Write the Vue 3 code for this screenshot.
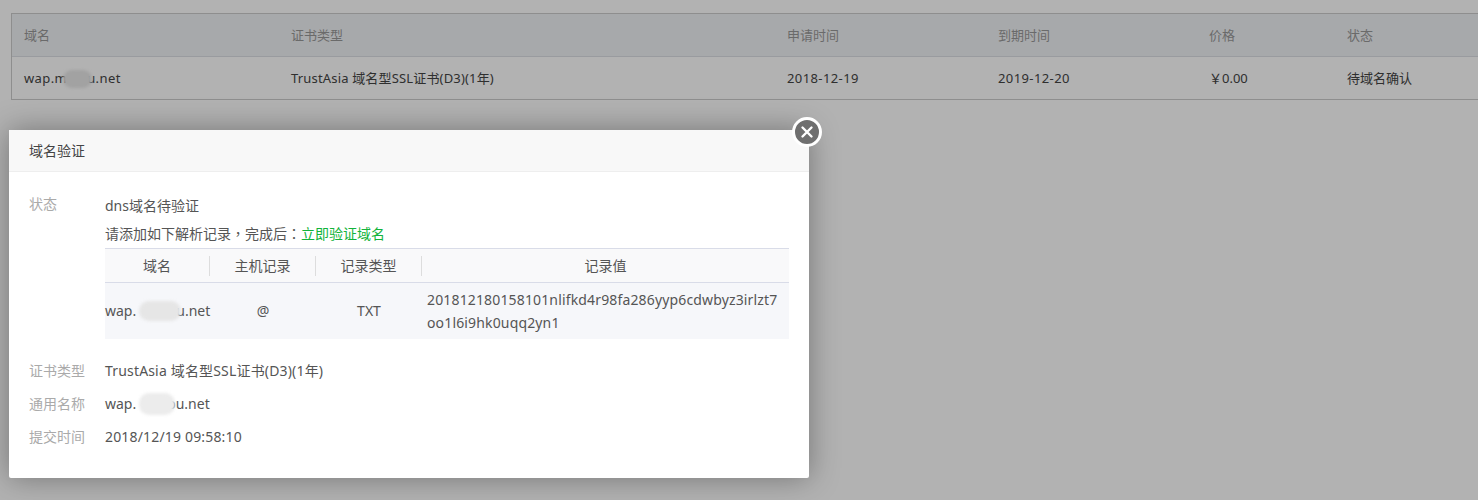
<script setup>
const heads = ['域名', '证书类型', '申请时间', '到期时间', '价格', '状态']
const recordHeads = ['域名', '主机记录', '记录类型', '记录值']
</script>

<template>
  <div class="page">
    <div class="list">
      <div class="list-row list-head">
        <div v-for="h in heads" :key="h">{{ h }}</div>
      </div>
      <div class="list-row list-body">
        <div class="wide">wap.m<span class="mask mask-list"></span>u.net</div>
        <div class="latin">TrustAsia 域名型SSL证书(D3)(1年)</div>
        <div class="wide">2018-12-19</div>
        <div class="wide">2019-12-20</div>
        <div>￥0.00</div>
        <div>待域名确认</div>
      </div>
    </div>

    <div class="scrim"></div>

    <div class="modal">
      <button class="close" aria-label="关闭">
        <svg width="14" height="14" viewBox="0 0 14 14">
          <path d="M2.5 2.5l9 9M11.5 2.5l-9 9" stroke="#fff" stroke-width="2.4" stroke-linecap="round" fill="none" />
        </svg>
      </button>
      <div class="modal-title">域名验证</div>
      <div class="modal-body">
        <div class="field field-status">
          <div class="label label-status">状态</div>
          <div class="value">
            <div class="status-line">dns域名待验证</div>
            <div class="hint">请添加如下解析记录<span class="punct">，</span>完成后<span class="punct">：</span><a class="verify">立即验证域名</a></div>
            <div class="records">
              <div class="rec-head">
                <div v-for="h in recordHeads" :key="h" class="rec-cell"><span>{{ h }}</span></div>
              </div>
              <div class="rec-row">
                <div class="rec-domain">wap.<span class="mask mask-rec"></span>u.net</div>
                <div>@</div>
                <div>TXT</div>
                <div class="rec-value">201812180158101nlifkd4r98fa286yyp6cdwbyz3irlzt7<br />oo1l6i9hk0uqq2yn1</div>
              </div>
            </div>
          </div>
        </div>
        <div class="field">
          <div class="label">证书类型</div>
          <div class="value latin">TrustAsia 域名型SSL证书(D3)(1年)</div>
        </div>
        <div class="field">
          <div class="label">通用名称</div>
          <div class="value">wap.<span class="mask mask-name"></span>ou.net</div>
        </div>
        <div class="field">
          <div class="label">提交时间</div>
          <div class="value latin">2018/12/19 09:58:10</div>
        </div>
      </div>
    </div>
  </div>
</template>

<style scoped>
.page {
  position: relative;
  width: 1478px;
  height: 500px;
  overflow: hidden;
  background: #fff;
  padding: 13px 0 0 11px;
  box-sizing: border-box;
  font-family: "Noto Sans", "Noto Sans CJK SC", sans-serif;
  font-size: 14px;
  color: #555;
}
.list {
  width: 1600px;
  border: 1px solid #ccc;
  box-sizing: border-box;
}
.list-row {
  display: grid;
  grid-template-columns: 267px 496px 211px 211px 138px 1fr;
  padding-left: 12px;
  height: 42px;
  line-height: 24px;
  align-items: center;
  font-size: 13px;
}
.list-head {
  background: #f0f2f5;
  color: #999;
  border-bottom: 1px solid #dcdfe4;
  padding-bottom: 1px;
  height: 41px;
}
.list-body {
  color: #444;
}
.wide {
  letter-spacing: 0.4px;
}
.latin {
  letter-spacing: 0.17px;
}
.punct {
  font-family: "Noto Sans CJK TC", sans-serif;
  line-height: 1;
}
.mask {
  display: inline-block;
  vertical-align: -5px;
  border-radius: 10px;
  filter: blur(1.5px);
}
.mask-list {
  width: 29px;
  height: 18px;
  margin: 0 -5px 0 -4px;
  background: #e8e8e8;
}
.mask-rec {
  width: 42px;
  height: 20px;
  margin: 0 -5px 0 3px;
  background: #e6e6e6;
}
.mask-name {
  width: 36px;
  height: 22px;
  margin: 0 -8px 0 3px;
  vertical-align: -6px;
  background: #ececec;
}
.scrim {
  position: absolute;
  inset: 0;
  background: rgba(0, 0, 0, 0.3);
}
.modal {
  position: absolute;
  left: 9px;
  top: 130px;
  width: 800px;
  height: 348px;
  background: #fff;
  border-radius: 2px;
  box-shadow: 0 0 30px rgba(0, 0, 0, 0.35);
}
.close {
  position: absolute;
  right: -13px;
  top: -13px;
  width: 30px;
  height: 30px;
  padding: 0;
  border: 3px solid #fff;
  border-radius: 50%;
  background: #6f6f6f;
  display: flex;
  align-items: center;
  justify-content: center;
  box-sizing: border-box;
}
.modal-title {
  height: 41px;
  line-height: 41px;
  padding-left: 20px;
  background: #f8f8f8;
  border-bottom: 1px solid #eee;
  font-size: 14px;
  color: #444;
}
.modal-body {
  padding-top: 18px;
}
.field {
  display: flex;
  padding-left: 20px;
  height: 33px;
  line-height: 33px;
}
.field-status {
  height: auto;
  line-height: normal;
  margin-bottom: 15px;
}
.label {
  width: 76px;
  flex: none;
  font-size: 14px;
  color: #aaa;
}
.label-status {
  line-height: 28px;
}
.value {
  flex: 1;
  color: #555;
  padding-right: 20px;
}
.status-line {
  line-height: 32px;
  color: #555;
}
.hint {
  height: 24px;
  line-height: 24px;
  margin-bottom: 2px;
  font-size: 14px;
  color: #555;
}
.verify {
  color: #12b33a;
}
.records {
  border-top: 1px solid #d9dce8;
  line-height: 20px;
}
.rec-head,
.rec-row {
  display: grid;
  grid-template-columns: 105px 106px 106px 1fr;
  text-align: center;
}
.rec-head {
  height: 33px;
  align-items: center;
  background: #f9f9fa;
  border-bottom: 1px solid #d9dce8;
  font-size: 14px;
  color: #555;
}
.rec-cell {
  height: 20px;
  line-height: 20px;
  border-right: 1px solid #ddd;
}
.rec-cell:last-child {
  border-right: 0;
}
.rec-row {
  height: 56px;
  align-items: center;
  background: #f6f7fa;
}
.rec-domain {
  text-align: left;
  white-space: nowrap;
  line-height: 24px;
}
.rec-value {
  text-align: left;
  padding-left: 5px;
  line-height: 23px;
  letter-spacing: 0.15px;
  white-space: nowrap;
}
</style>
